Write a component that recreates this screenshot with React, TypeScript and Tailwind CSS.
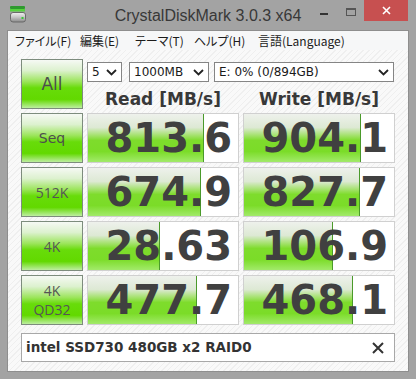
import React from "react";

const rows = [
  { label: ["Seq"], read: "813.6", rw: 116, write: "904.1", ww: 117, kind: "seq" },
  { label: ["512K"], read: "674.9", rw: 113, write: "827.7", ww: 116, kind: "n" },
  { label: ["4K"], read: "28.63", rw: 72, write: "106.9", ww: 89, kind: "n" },
  { label: ["4K", "QD32"], read: "477.7", rw: 109, write: "468.1", ww: 109, kind: "n" },
];

function Chevron() {
  return (
    <svg width="11" height="7" viewBox="0 0 11 7" className="shrink-0">
      <polyline points="1,1 5.5,5.5 10,1" fill="none" stroke="#222" strokeWidth="1.8" />
    </svg>
  );
}

function Select({ w, text }: { w: string; text: string }) {
  return (
    <div className={`${w} h-[20px] border border-[#858585] bg-white flex items-center justify-between pl-[4px] pr-[4px]`}>
      <span className="font-['DejaVu_Sans',sans-serif] text-[12px] leading-none text-[#1a1a1a] whitespace-nowrap">{text}</span>
      <Chevron />
    </div>
  );
}

function GreenButton({ children }: { children: React.ReactNode }) {
  return (
    <div className="h-[50px] flex flex-col items-center justify-center border border-[#7d8c7d] bg-[linear-gradient(to_bottom,#f6f9f4_0%,#dcf1ce_22%,#9be55a_45%,#68dc0a_58%,#62d900_82%,#bdeea0_100%)] text-[#4d4d4d]">
      {children}
    </div>
  );
}

function ValueBox({ v, w }: { v: string; w: number }) {
  return (
    <div className="relative h-[50px] border border-[#d0d0d0] bg-white flex items-center justify-end pr-[6px]">
      <div
        className="absolute left-0 top-0 bottom-0 border-r border-[#4a9a2a] bg-[linear-gradient(to_bottom,#eef1ec_0%,#dde9d4_28%,#a6e270_44%,#7edc2c_55%,#7bdc28_78%,#a2ea6a_100%)]"
        style={{ width: w }}
      />
      <span className="relative font-['DejaVu_Sans',sans-serif] font-bold text-[40px] leading-none text-[#404040]">{v}</span>
    </div>
  );
}

function AppIcon() {
  return (
    <svg width="16" height="17" viewBox="0 0 16 17">
      <defs>
        <linearGradient id="disk" x1="0" y1="0" x2="0" y2="1">
          <stop offset="0" stopColor="#f2f2f2" />
          <stop offset="0.5" stopColor="#c4c4c4" />
          <stop offset="1" stopColor="#8a8a8a" />
        </linearGradient>
      </defs>
      <rect x="0" y="0" width="15" height="3" rx="1" fill="#2f9a2f" />
      <rect x="0" y="3" width="15" height="2.5" fill="#56d23e" />
      <rect x="0.5" y="6.5" width="15" height="9.5" rx="2.5" fill="url(#disk)" stroke="#6a6a6a" />
      <rect x="11.5" y="11" width="2" height="2" fill="#37c837" />
    </svg>
  );
}

export default function App() {
  return (
    <div className="w-[416px] h-[379px] bg-[#a3a3a3] overflow-hidden">
      {/* Title bar */}
      <div className="h-[30px] grid grid-cols-[1fr_auto_1fr] items-start">
        <div className="pl-[10px] pt-[6px]">
          <AppIcon />
        </div>
        <div className="pt-[6px] font-['Liberation_Sans',sans-serif] text-[16px] leading-[20px] text-[#383838] whitespace-nowrap">
          CrystalDiskMark 3.0.3 x64
        </div>
        <div className="flex justify-end items-start">
          <div className="mt-[13px] w-[8px] h-[2px] bg-[#333] mr-[18px]" />
          <div className="mt-[8px] w-[10px] h-[8px] border border-[#555] border-t-2 mr-[8px]" />
          <div className="w-[44px] h-[21px] bg-[#c75050] flex items-center justify-center mr-[8px]">
            <svg width="9" height="9" viewBox="0 0 9 9">
              <path d="M1 1 L8 8 M8 1 L1 8" stroke="#fff" strokeWidth="1.6" />
            </svg>
          </div>
        </div>
      </div>

      {/* Inner window */}
      <div className="mx-[7px] h-[342px] border border-[#8e8e8e] flex flex-col">
        {/* Menu */}
        <div className="h-[19px] bg-[#f6f7f8] flex items-center pl-[7px] font-['Noto_Sans_CJK_JP',sans-serif] text-[12px] leading-none text-[#1b1b1b] [font-feature-settings:'palt'] whitespace-nowrap">
          <span className="w-[65px]">ファイル(F)</span>
          <span className="w-[55px]">編集(E)</span>
          <span className="w-[59px]">テーマ(T)</span>
          <span className="w-[64px]">ヘルプ(H)</span>
          <span>言語(Language)</span>
        </div>

        {/* Client */}
        <div className="flex-1 px-[13px] pt-[9px] bg-[repeating-linear-gradient(135deg,#f9f9f9_0px,#f9f9f9_3px,#efefef_3px,#efefef_4px)]">
          <div className="grid grid-cols-[62px_152px_152px] gap-[4px]">
            <GreenButton>
              <span className="font-['DejaVu_Sans',sans-serif] text-[17px] leading-none">All</span>
            </GreenButton>
            <div className="col-span-2 flex flex-col">
              <div className="mt-[3px] flex">
                <Select w="w-[35px]" text="5" />
                <div className="w-[7px]" />
                <Select w="w-[80px]" text="1000MB" />
                <div className="w-[5px]" />
                <Select w="w-[180px]" text="E: 0% (0/894GB)" />
              </div>
              <div className="mt-[7px] grid grid-cols-2 gap-[4px] font-['DejaVu_Sans',sans-serif] font-bold text-[17px] leading-[20px] text-[#383838] text-center whitespace-nowrap">
                <div>Read [MB/s]</div>
                <div>Write [MB/s]</div>
              </div>
            </div>

            {rows.map((r, i) => (
              <React.Fragment key={i}>
                <GreenButton>
                  {r.label.map((l, j) => (
                    <span
                      key={j}
                      className={
                        r.kind === "seq"
                          ? "font-['DejaVu_Sans',sans-serif] text-[14px] leading-none"
                          : "font-['Open_Sans',sans-serif] text-[14px] leading-[19px] text-[#555]"
                      }
                    >
                      {l}
                    </span>
                  ))}
                </GreenButton>
                <ValueBox v={r.read} w={r.rw} />
                <ValueBox v={r.write} w={r.ww} />
              </React.Fragment>
            ))}
          </div>

          {/* Comment */}
          <div className="mt-[8px] h-[29px] border border-[#a8a8a8] bg-white flex items-center justify-between pl-[4px] pr-[10px]">
            <span className="font-['DejaVu_Sans',sans-serif] font-bold text-[13.5px] leading-none text-[#333] whitespace-nowrap">
              intel SSD730 480GB x2 RAID0
            </span>
            <svg width="12" height="12" viewBox="0 0 12 12">
              <path d="M1 1 L11 11 M11 1 L1 11" stroke="#333" strokeWidth="2" />
            </svg>
          </div>
        </div>
      </div>
    </div>
  );
}
